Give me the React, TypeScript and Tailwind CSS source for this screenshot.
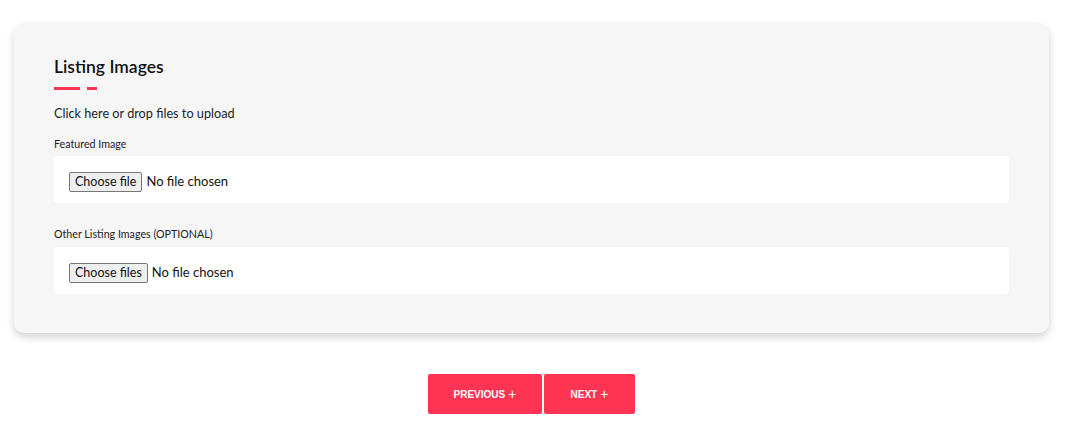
const FilePicker = ({ label, multiple }: { label: string; multiple?: boolean }) => {
  return (
    <label className="flex items-center cursor-pointer text-[13px] text-[#111]">
      <input type="file" multiple={multiple} className="hidden" />
      <span className="h-[20px] px-[5px] flex items-center border border-[#767676] bg-[#efefef] rounded-[2px] text-[12.5px] text-[#111]">
        {label}
      </span>
      <span className="ml-[4px]">No file chosen</span>
    </label>
  );
};

const App = () => {
  return (
    <div className="min-h-screen bg-white pt-[23px] pl-[14px] pr-[20px]">
      <div className="font-['Lato',sans-serif] text-[#111]">
        <div className="bg-[#f6f6f6] rounded-[10px] shadow-[0_4px_8px_rgba(0,0,0,0.18)] px-10 pt-[33px] pb-[39px]">
          <h3 className="text-[17.5px] font-semibold leading-[22px] text-[#111]">Listing Images</h3>
          <div className="flex gap-[7px] mt-[9px]">
            <span className="block w-[26px] h-[3px] bg-[#ff3352]"></span>
            <span className="block w-[10px] h-[3px] bg-[#ff3352]"></span>
          </div>
          <p className="text-[12.7px] mt-[14px] leading-[18px] text-[#222]">Click here or drop files to upload</p>

          <label className="block text-[10.7px] mt-[15px] leading-[14px] text-[#222]">Featured Image</label>
          <div className="bg-white rounded-[4px] h-[47px] mt-[5px] flex items-center px-[15px] pt-[5px]">
            <FilePicker label="Choose file" />
          </div>

          <label className="block text-[10.7px] mt-[24px] leading-[14px] text-[#222]">Other Listing Images (OPTIONAL)</label>
          <div className="bg-white rounded-[4px] h-[47px] mt-[6px] flex items-center px-[15px] pt-[5px]">
            <FilePicker label="Choose files" multiple />
          </div>
        </div>

        <div className="flex justify-center gap-[2px] mt-[41px]">
          <button className="w-[114px] h-10 bg-[#ff3352] rounded-[2px] text-white text-[10px] font-bold font-['Liberation_Sans',sans-serif] flex items-center justify-center gap-[3px]">
            PREVIOUS <span className="text-[14px] font-normal leading-none">+</span>
          </button>
          <button className="w-[91px] h-10 bg-[#ff3352] rounded-[2px] text-white text-[10px] font-bold font-['Liberation_Sans',sans-serif] flex items-center justify-center gap-[3px]">
            NEXT <span className="text-[14px] font-normal leading-none">+</span>
          </button>
        </div>
      </div>
    </div>
  );
};

export default App;
